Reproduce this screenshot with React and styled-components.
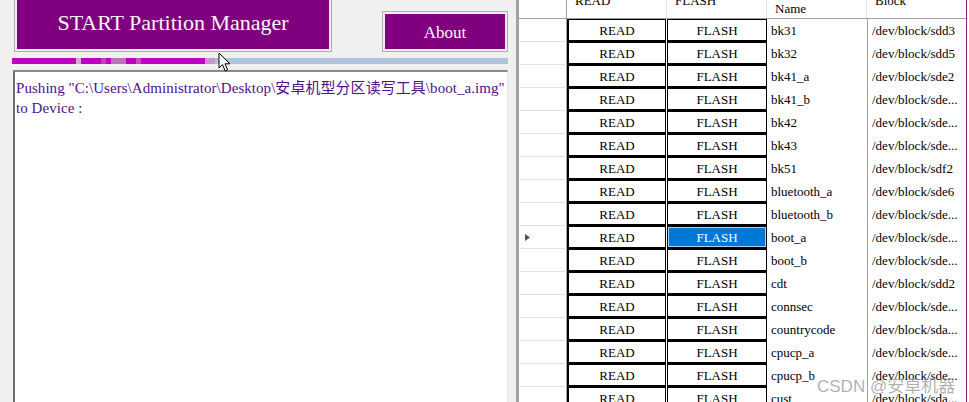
import React from "react";
import styled, { createGlobalStyle } from "styled-components";

const GlobalStyle = createGlobalStyle`
  html, body {
    margin: 0;
    padding: 0;
    background: #f0f0f0;
    overflow: hidden;
  }
  * {
    box-sizing: border-box;
  }
`;

const serif = `"Liberation Serif", "Noto Sans CJK SC", serif`;

const progress = [
  [64, "#c000c0"],
  [5, "#c4b4c4"],
  [20, "#c000c0"],
  [5, "#c040b8"],
  [5, "#c000c0"],
  [15, "#c070c0"],
  [10, "#c000c0"],
  [5, "#c050c0"],
  [64, "#c000c0"],
  [10, "#c898c8"],
];

const rows = [
  ["bk31", "/dev/block/sdd3"],
  ["bk32", "/dev/block/sdd5"],
  ["bk41_a", "/dev/block/sde2"],
  ["bk41_b", "/dev/block/sde..."],
  ["bk42", "/dev/block/sde..."],
  ["bk43", "/dev/block/sde..."],
  ["bk51", "/dev/block/sdf2"],
  ["bluetooth_a", "/dev/block/sde6"],
  ["bluetooth_b", "/dev/block/sde..."],
  ["boot_a", "/dev/block/sde...", true],
  ["boot_b", "/dev/block/sde..."],
  ["cdt", "/dev/block/sdd2"],
  ["connsec", "/dev/block/sde..."],
  ["countrycode", "/dev/block/sda..."],
  ["cpucp_a", "/dev/block/sde..."],
  ["cpucp_b", "/dev/block/sde..."],
  ["cust", "/dev/block/sda..."],
];

const App = () => {
  return (
    <>
      <GlobalStyle />
      <Window>
        <LeftPanel>
          <TopBar>
            <StartButton>START Partition Manager</StartButton>
            <AboutButton>About</AboutButton>
          </TopBar>
          <Progress>
            {progress.map(([w, c], i) => (
              <Segment key={i} style={{ width: w, background: c }} />
            ))}
          </Progress>
          <LogBox>
            Pushing "C:\Users\Administrator\Desktop\安卓机型分区读写工具\boot_a.img"
            <br />
            to Device :
          </LogBox>
        </LeftPanel>
        <Splitter />
        <GridPanel>
          <Grid>
            <HeaderRow>
              <RowHeaderCell $header />
              <HeaderCell>READ</HeaderCell>
              <HeaderCell>FLASH</HeaderCell>
              <HeaderCell>
                Partition
                <br />
                Name
              </HeaderCell>
              <HeaderCell $last>Block</HeaderCell>
            </HeaderRow>
            {rows.map(([name, block, selected]) => (
              <Row key={name}>
                <RowHeaderCell>
                  {selected && (
                    <svg width="5" height="7" viewBox="0 0 5 7">
                      <path d="M0 0 L5 3.5 L0 7 Z" fill="#3f5f3f" />
                    </svg>
                  )}
                </RowHeaderCell>
                <ButtonCell $first>READ</ButtonCell>
                <ButtonCell $active={selected}>FLASH</ButtonCell>
                <TextCell>{name}</TextCell>
                <TextCell $block>{block}</TextCell>
              </Row>
            ))}
          </Grid>
          <EdgeLine />
        </GridPanel>
        <Cursor width="14" height="21" viewBox="0 0 14 21">
          <path
            d="M1 1 L1 16 L4.5 12.5 L7.2 19 L9.6 18 L7 11.8 L12 11.8 Z"
            fill="#fff"
            stroke="#000"
            strokeWidth="1"
            strokeLinejoin="miter"
          />
        </Cursor>
        <Watermark>CSDN @安卓机器</Watermark>
      </Window>
    </>
  );
};

const Window = styled.div`
  position: relative;
  display: flex;
  width: 969px;
  height: 402px;
  overflow: hidden;
  background: #f0f0f0;
  font-family: ${serif};
`;

const LeftPanel = styled.div`
  width: 508px;
  display: flex;
  flex-direction: column;
  padding-left: 12px;
`;

const TopBar = styled.div`
  display: flex;
  align-items: flex-start;
  padding-left: 2px;
  gap: 50px;
`;

const PurpleButton = styled.div`
  display: flex;
  align-items: center;
  justify-content: center;
  background: #800080;
  color: #f6f6f6;
  border: 1px solid #adadad;
  box-shadow: inset 0 0 0 2px #f0f0f0;
  font-family: ${serif};
`;

const StartButton = styled(PurpleButton)`
  width: 318px;
  height: 60px;
  margin-top: -8px;
  font-size: 22px;
  padding-top: 1px;
`;

const AboutButton = styled(PurpleButton)`
  width: 126px;
  height: 41px;
  margin-top: 11px;
  font-size: 17px;
  padding-top: 2px;
`;

const Progress = styled.div`
  display: flex;
  width: 497px;
  height: 6px;
  margin-top: 6px;
  background: #b0c4de;
`;

const Segment = styled.div`
  height: 100%;
  flex-shrink: 0;
`;

const LogBox = styled.div`
  flex: 1;
  margin-top: 6px;
  margin-left: 1px;
  width: 495px;
  background: #fff;
  border-top: 2px solid #8a8a8a;
  border-left: 2px solid #6e6e6e;
  border-right: 1px solid #e3e3e3;
  padding: 6px 0 0 1px;
  color: #50108c;
  font-size: 15px;
  line-height: 20px;
  white-space: nowrap;
  letter-spacing: 0.05px;
`;

const Splitter = styled.div`
  width: 8px;
  background: #f0f0f0;
`;

const GridPanel = styled.div`
  flex: 1;
  display: flex;
  background: #fff;
  border-left: 3px solid #a3a3a3;
  overflow: hidden;
`;

const Grid = styled.div`
  width: 447px;
  margin-top: -17px;
  display: flex;
  flex-direction: column;
`;

const EdgeLine = styled.div`
  width: 1px;
  background: #8a208a;
  margin-right: 2px;
`;

const HeaderRow = styled.div`
  display: grid;
  grid-template-columns: 48px 100px 100px 100px 99px;
  height: 36px;
  border-bottom: 1px solid #a0a0a0;
  flex-shrink: 0;
`;

const Row = styled.div`
  display: grid;
  grid-template-columns: 48px 100px 100px 100px 99px;
  height: 23px;
  flex-shrink: 0;
`;

const RowHeaderCell = styled.div`
  display: flex;
  align-items: center;
  padding-left: 6px;
  border-right: 1px solid #a0a0a0;
  border-bottom: ${(p) => (p.$header ? "none" : "1px solid #e3e3e3")};
`;

const HeaderCell = styled.div`
  display: flex;
  align-items: center;
  padding-left: 8px;
  font-size: 13px;
  line-height: 15px;
  color: #000;
  border-right: 1px solid ${(p) => (p.$last ? "#fff" : "#e3e3e3")};
`;

const ButtonCell = styled.div`
  display: flex;
  align-items: center;
  justify-content: center;
  padding-top: 1px;
  font-size: 13px;
  color: ${(p) => (p.$active ? "#fff" : "#000")};
  background: ${(p) => (p.$active ? "#0078d7" : "#fff")};
  border: 1px solid #000;
  border-top-width: 1px;
  border-bottom-width: 2px;
  border-left-width: ${(p) => (p.$first ? "2px" : "1px")};
  margin-right: ${(p) => (p.$first ? "1px" : "0")};
  box-shadow: ${(p) => (p.$active ? "inset 0 0 0 1px #a9d1f5" : "none")};
`;

const TextCell = styled.div`
  display: flex;
  align-items: center;
  padding: 1px 0 0 4px;
  font-size: 13px;
  color: #000;
  white-space: nowrap;
  overflow: hidden;
  border-left: ${(p) => (p.$block ? "1px solid #a0a0a0" : "none")};
`;

const Cursor = styled.svg`
  position: absolute;
  left: 218px;
  top: 52px;
`;

const Watermark = styled.div`
  position: absolute;
  left: 817px;
  top: 372px;
  font-family: "Liberation Sans", "Noto Sans CJK SC", sans-serif;
  font-size: 17px;
  color: rgba(150, 150, 150, 0.75);
  white-space: nowrap;
`;

export default App;
